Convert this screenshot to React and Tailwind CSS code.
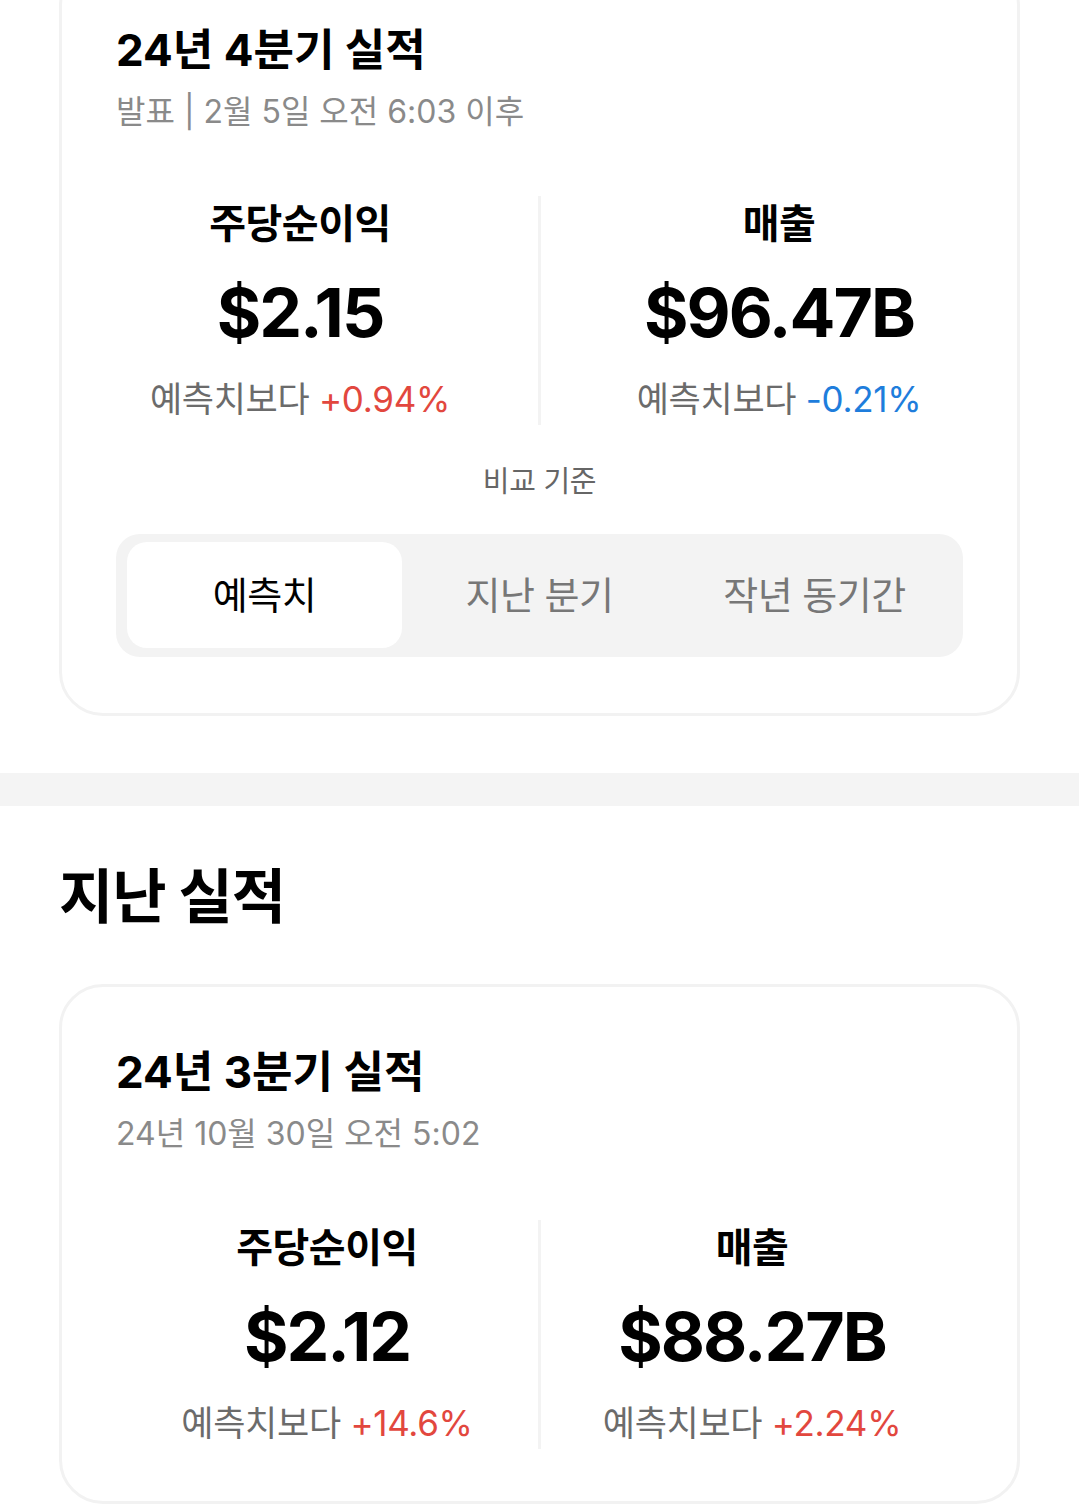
import React from 'react';

const FONT = { fontFamily: 'Inter, "Noto Sans CJK KR", "Noto Sans", sans-serif' };

function Metric({ label, value, diff, tone }) {
  return (
    <div className="flex-1 flex flex-col items-center">
      <span className="text-[40px] font-bold tracking-[-0.5px] text-black leading-none">{label}</span>
      <span className="mt-[34px] text-[68px] font-bold tracking-[-2px] text-black leading-none">{value}</span>
      <span className="mt-[36px] text-[35px] leading-none tracking-[-0.3px] text-[#6b6b6b]">
        예측치보다{' '}
        <span className={tone === 'up' ? 'text-[#e2473e]' : 'text-[#1e7ddc]'}>{diff}</span>
      </span>
    </div>
  );
}

function MetricsRow({ items, padded }) {
  return (
    <div className={`flex items-stretch ${padded ? 'px-[54px]' : ''}`}>
      <div className="flex-1 flex justify-center py-[8px]">
        <Metric {...items[0]} />
      </div>
      <div className="w-[3px] bg-[#f3f3f3] shrink-0" />
      <div className="flex-1 flex justify-center py-[8px]">
        <Metric {...items[1]} />
      </div>
    </div>
  );
}

function Tabs() {
  const tabs = ['예측치', '지난 분기', '작년 동기간'];
  return (
    <div className="mx-[54px] mt-[38px] bg-[#f3f3f3] rounded-[24px] pt-[8px] pb-[9px] px-[11px] grid grid-cols-3">
      {tabs.map((t, i) => (
        <div
          key={t}
          className={`h-[106px] flex items-center justify-center rounded-[20px] text-[38px] tracking-[-0.5px] ${
            i === 0 ? 'bg-white text-black' : 'text-[#777777]'
          }`}
        >
          {t}
        </div>
      ))}
    </div>
  );
}

export default function App() {
  return (
    <div className="w-[1079px] h-[1504px] overflow-hidden bg-white" style={FONT}>
      {/* current quarter card */}
      <div className="mx-[59px] -mt-[38px] border-[3px] border-[#f2f2f2] rounded-[44px] pt-[63px] pb-[56px]">
        <div className="px-[54px]">
          <h2 className="text-[44px] font-bold text-black leading-none">24년 4분기 실적</h2>
          <p className="mt-[24px] text-[32px] text-[#8a8a8a] leading-none">발표 | 2월 5일 오전 6:03 이후</p>
        </div>
        <div className="mt-[68px]">
          <MetricsRow
            items={[
              { label: '주당순이익', value: '$2.15', diff: '+0.94%', tone: 'up' },
              { label: '매출', value: '$96.47B', diff: '-0.21%', tone: 'down' },
            ]}
          />
        </div>
        <p className="mt-[42px] text-center text-[29px] tracking-[-0.3px] text-[#666666] leading-none">비교 기준</p>
        <Tabs />
      </div>

      <div className="mt-[57px] h-[33px] bg-[#f4f4f4]" />

      <h1 className="mt-[61px] ml-[59px] text-[59px] font-bold tracking-[-1px] text-black leading-none">지난 실적</h1>

      {/* previous quarter card */}
      <div className="mx-[59px] mt-[58px] border-[3px] border-[#f2f2f2] rounded-[44px] pt-[63px] pb-[52px]">
        <div className="px-[54px]">
          <h2 className="text-[44px] font-bold text-black leading-none">24년 3분기 실적</h2>
          <p className="mt-[24px] text-[32px] text-[#8a8a8a] leading-none">24년 10월 30일 오전 5:02</p>
        </div>
        <div className="mt-[70px]">
          <MetricsRow
            padded
            items={[
              { label: '주당순이익', value: '$2.12', diff: '+14.6%', tone: 'up' },
              { label: '매출', value: '$88.27B', diff: '+2.24%', tone: 'up' },
            ]}
          />
        </div>
      </div>
    </div>
  );
}
